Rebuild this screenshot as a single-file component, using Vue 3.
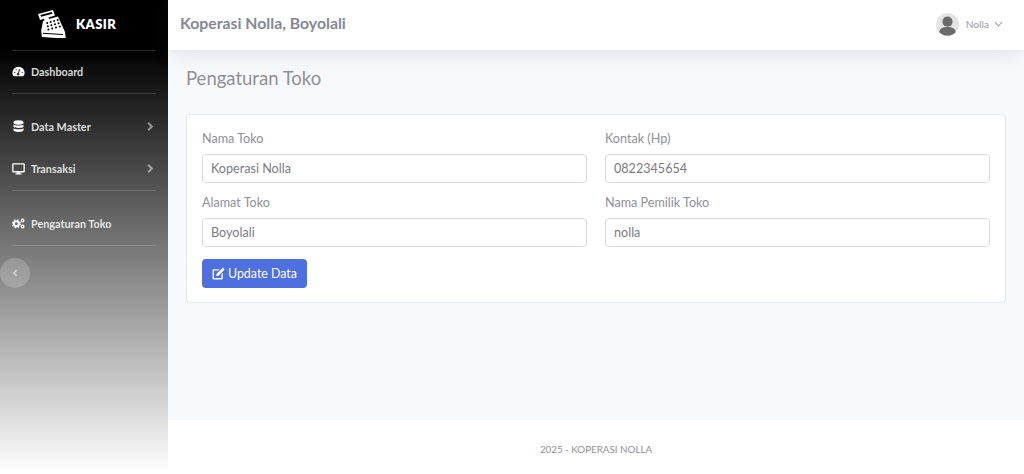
<script setup>
const menu = [
  { label: 'Data Master', icon: 'database', arrow: true },
  { label: 'Transaksi', icon: 'desktop', arrow: true },
]
</script>

<template>
  <div class="wrapper">
    <aside class="sidebar">
      <a class="brand">
        <svg class="brand-icon" viewBox="0 0 28 28">
          <path d="M0 4 15 0l2 5.500-6.500 1.900.5 1.500 9-2.400 7 15.500.800 6.700-24-1.800-.6-6.500L5 11l1.500-.5-.5-1.700-4 1.100z" fill="#fff" />
          <path d="M2.400 4.900 13.800 2l.6 1.700-11.300 3z" fill="#000" />
          <g fill="#000">
            <circle cx="9.200" cy="13" r="1" />
            <circle cx="12.700" cy="12" r="1" />
            <circle cx="16.200" cy="11" r="1" />
            <circle cx="19.700" cy="10" r="1" />
            <circle cx="9.800" cy="16.300" r="1" />
            <circle cx="13.400" cy="15.300" r="1" />
            <circle cx="17" cy="14.300" r="1" />
            <circle cx="20.600" cy="13.300" r="1" />
            <circle cx="10.400" cy="19.600" r="1" />
            <circle cx="14.200" cy="18.600" r="1" />
            <circle cx="18" cy="17.600" r="1" />
            <circle cx="21.800" cy="16.600" r="1" />
          </g>
          <path d="M5 23.300l20 1.200" stroke="#000" stroke-width="1" />
        </svg>
        <span>KASIR</span>
      </a>
      <hr />
      <a class="item">
        <svg class="ic" viewBox="0 0 14 12">
          <path d="M7 .8A6.600 6.600 0 0 0 .4 7.400c0 1.300.4 2.400 1 3.300.2.300.5.500.9.500h9.400c.4 0 .7-.2.9-.5.600-.9 1-2 1-3.300A6.600 6.600 0 0 0 7 .8z" fill="#fff" />
          <path d="M6.400 9.400 8.200 3.600" stroke="#333" stroke-width="1.200" />
          <circle cx="6.600" cy="9" r="1.300" fill="#333" />
          <circle cx="3" cy="7" r=".7" fill="#333" />
          <circle cx="4.400" cy="4.200" r=".7" fill="#333" />
          <circle cx="11" cy="7" r=".7" fill="#333" />
        </svg>
        <span>Dashboard</span>
      </a>
      <hr />
      <div class="group">
        <a v-for="m in menu" :key="m.label" class="item">
          <svg v-if="m.icon === 'database'" class="ic" viewBox="0 0 14 14">
            <ellipse cx="7" cy="2.800" rx="5.400" ry="2.400" fill="#fff" />
            <path d="M1.600 4.800c1 1.500 9.800 1.500 10.800 0v2.600c-.6 1.700-10.200 1.700-10.800 0zM1.600 8.800c1 1.500 9.800 1.500 10.800 0v2.600c-.6 1.900-10.200 1.900-10.800 0z" fill="#fff" />
          </svg>
          <svg v-else class="ic" viewBox="0 0 14 14">
            <path d="M1.200 1.400h11.600c.6 0 1 .4 1 1v7.900c0 .6-.4 1-1 1H1.200c-.6 0-1-.4-1-1V2.400c0-.6.4-1 1-1zm.4 1.400v6.900h10.800V2.800z" fill="#fff" fill-rule="evenodd" />
            <path d="M5.200 11h3.600l.4 1.500h1.200v1H3.600v-1h1.200z" fill="#fff" />
          </svg>
          <span>{{ m.label }}</span>
          <svg class="arrow" viewBox="0 0 8 12">
            <path d="M2 2l4 4-4 4" fill="none" stroke="currentColor" stroke-width="2.200" />
          </svg>
        </a>
      </div>
      <hr />
      <a class="item settings">
        <svg class="ic" viewBox="0 0 14 12">
          <circle cx="4.700" cy="6.300" r="2.700" fill="none" stroke="#fff" stroke-width="2.200" />
          <circle cx="4.700" cy="6.300" r="4.300" fill="none" stroke="#fff" stroke-width="1.300" stroke-dasharray="1.700 1.700" />
          <circle cx="11.400" cy="2.800" r="1.400" fill="none" stroke="#fff" stroke-width="1.400" />
          <circle cx="11.400" cy="9.200" r="1.400" fill="none" stroke="#fff" stroke-width="1.400" />
        </svg>
        <span>Pengaturan Toko</span>
      </a>
      <hr />
      <button class="toggle">
        <svg viewBox="0 0 8 12">
          <path d="M5.500 2.500 2 6l3.500 3.500" fill="none" stroke="currentColor" stroke-width="1.800" />
        </svg>
      </button>
    </aside>

    <div class="main">
      <header class="topbar">
        <h2>Koperasi Nolla, Boyolali</h2>
        <div class="user">
          <svg class="avatar" viewBox="0 0 24 24">
            <circle cx="12" cy="12" r="12" fill="#e4e4e4" />
            <circle cx="12" cy="9" r="5.300" fill="#6b6b6b" />
            <path d="M3.500 20c0-4 3.500-5.500 8.500-5.500s8.500 1.500 8.500 5.500a12 12 0 0 1-17 0z" fill="#6b6b6b" />
          </svg>
          <span>Nolla</span>
          <svg class="caret" viewBox="0 0 10 6">
            <path d="M1 1l4 4 4-4" fill="none" stroke="currentColor" stroke-width="1.200" />
          </svg>
        </div>
      </header>

      <main class="content">
        <h1>Pengaturan Toko</h1>
        <section class="card">
          <div class="form-grid">
            <label class="field">
              <span>Nama Toko</span>
              <input type="text" value="Koperasi Nolla" />
            </label>
            <label class="field">
              <span>Kontak (Hp)</span>
              <input type="text" value="0822345654" />
            </label>
            <label class="field">
              <span>Alamat Toko</span>
              <input type="text" value="Boyolali" />
            </label>
            <label class="field">
              <span>Nama Pemilik Toko</span>
              <input type="text" value="nolla" />
            </label>
          </div>
          <button class="btn">
            <svg viewBox="0 0 14 14">
              <path d="M1.600 2.400h6.600L6.700 3.900H2.100v8h8V7.700l1.500-1.500v6.200c0 .5-.5 1-1 1H1.600c-.5 0-1-.5-1-1V3.400c0-.5.500-1 1-1z" fill="#fff" />
              <path d="M5 7.300 10.600 1.700l2 2L7 9.300l-2.400.4zM11.200 1.100c.3-.3.700-.3 1 0l1 1c.3.300.3.700 0 1l-.6.600-2-2z" fill="#fff" />
            </svg>
            Update Data
          </button>
        </section>
      </main>

      <footer class="footer">2025 - KOPERASI NOLLA</footer>
    </div>
  </div>
</template>

<style>
body {
  margin: 0;
}
</style>

<style scoped>
.wrapper {
  display: flex;
  height: 100vh;
  overflow: hidden;
  font-family: Lato, "Open Sans", sans-serif;
  color: #8f8f96;
}

.sidebar {
  width: 168px;
  flex-shrink: 0;
  display: flex;
  flex-direction: column;
  background: linear-gradient(180deg, #000 10%, #fff 100%);
}

.sidebar hr {
  width: 144px;
  margin: 0 12px;
  border: 0;
  border-top: 1px solid rgba(255, 255, 255, 0.15);
}

.brand {
  height: 50px;
  display: flex;
  align-items: center;
  gap: 10px;
  padding: 0 0 2px 38px;
  box-sizing: border-box;
  color: #fff;
  font-size: 13px;
  font-weight: 800;
  letter-spacing: 0.4px;
}

.brand-icon {
  width: 28px;
  height: 28px;
}

.item {
  display: flex;
  align-items: center;
  height: 42px;
  padding: 0 12px 2px;
  box-sizing: border-box;
  color: rgba(255, 255, 255, 0.85);
  font-size: 10.800px;
  font-weight: 700;
}

.settings {
  margin-top: 12px;
}

.group {
  padding: 12px 0 0;
  height: 96px;
  box-sizing: border-box;
}

.ic {
  width: 13px;
  height: 13px;
  margin-right: 6px;
}

.arrow {
  width: 8px;
  height: 11px;
  margin-left: auto;
  margin-right: 2px;
  color: rgba(255, 255, 255, 0.5);
}

.toggle {
  width: 30px;
  height: 30px;
  margin-top: 12px;
  padding: 0;
  border: 0;
  border-radius: 50%;
  display: flex;
  align-items: center;
  justify-content: center;
  background: rgba(255, 255, 255, 0.2);
  color: rgba(255, 255, 255, 0.55);
}

.toggle svg {
  width: 7px;
  height: 10px;
}

.main {
  flex: 1;
  min-width: 0;
  display: flex;
  flex-direction: column;
  background: #f8f9fc;
}

.topbar {
  height: 50px;
  flex-shrink: 0;
  display: flex;
  align-items: center;
  justify-content: space-between;
  padding: 0 21px 2px 12px;
  box-sizing: border-box;
  background: #fff;
  box-shadow: 0 2px 21px rgba(58, 59, 69, 0.15);
  position: relative;
}

.topbar h2 {
  margin: 0 0 3px;
  font-size: 15.800px;
  font-weight: 700;
  color: #858796;
}

.user {
  display: flex;
  align-items: center;
  font-size: 10.200px;
  color: #9a9ba8;
}

.avatar {
  width: 23px;
  height: 23px;
  margin-right: 7px;
}

.caret {
  width: 9px;
  height: 6px;
  margin-left: 5px;
}

.content {
  flex: 1;
  padding: 16px 18px 0;
}

.content h1 {
  margin: 0 0 24px;
  font-size: 18.500px;
  line-height: 25px;
  font-weight: 400;
  color: #8f8f96;
}

.content .card {
  margin-top: -1px;
}

.card {
  padding: 15px 15px 14px;
  background: #fff;
  border: 1px solid #e6e8f0;
  border-radius: 4px;
}

.form-grid {
  display: grid;
  grid-template-columns: 1fr 1fr;
  column-gap: 18px;
  row-gap: 11.500px;
}

.field {
  display: flex;
  flex-direction: column;
  gap: 6px;
  font-size: 12.600px;
}

.field span {
  line-height: 18px;
}

.field input {
  height: 28.500px;
  box-sizing: border-box;
  width: 100%;
  padding: 0 8px;
  border: 1px solid #d9dbe4;
  border-radius: 4px;
  font: inherit;
  color: #7a7a80;
  background: #fff;
}

.btn {
  margin-top: 12px;
  height: 29px;
  padding: 0 10px;
  display: inline-flex;
  align-items: center;
  gap: 3px;
  border: 0;
  border-radius: 4px;
  background: #4e6fdf;
  color: #fff;
  font: inherit;
  font-size: 12.400px;
}

.btn svg {
  width: 13px;
  height: 13px;
}

.footer {
  height: 54px;
  flex-shrink: 0;
  padding-top: 4px;
  box-sizing: border-box;
  display: flex;
  align-items: center;
  justify-content: center;
  background: #fff;
  font-size: 9.800px;
}
</style>
